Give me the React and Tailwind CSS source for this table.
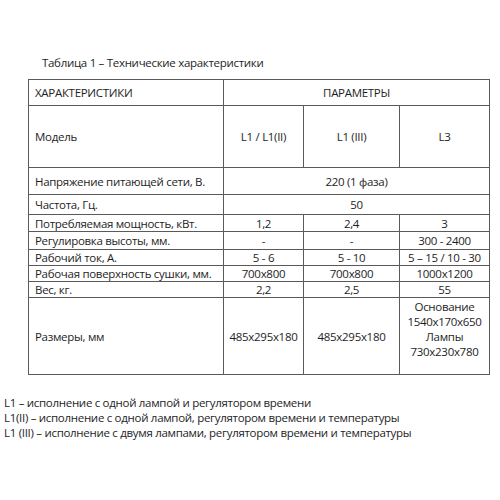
export default function App() {
  const font = { fontFamily: '"Open Sans", "Noto Sans", sans-serif' };
  const td = "border border-[#5a5a5a] p-0 align-middle";
  return (
    <div className="w-[500px] h-[500px] bg-white text-[#1e1e1e] relative tracking-[-0.3px]" style={font}>
      <div className="pt-[55px] pl-[42px] text-[11.5px] leading-[16px]">Таблица 1 – Технические характеристики</div>
      <table className="ml-[28px] mt-[8px] border-collapse table-fixed text-[11.5px] leading-[15px]">
        <colgroup>
          <col className="w-[195px]" />
          <col className="w-[80px]" />
          <col className="w-[96px]" />
          <col className="w-[90px]" />
        </colgroup>
        <tbody>
          <tr className="h-[26px]">
            <td className={td + " pl-[6px]"}>ХАРАКТЕРИСТИКИ</td>
            <td className={td + " text-center"} colSpan={3}>ПАРАМЕТРЫ</td>
          </tr>
          <tr className="h-[62px]">
            <td className={td + " pl-[6px]"}>Модель</td>
            <td className={td + " text-center"}>L1 / L1(II)</td>
            <td className={td + " text-center"}>L1 (III)</td>
            <td className={td + " text-center"}>L3</td>
          </tr>
          <tr className="h-[27px]">
            <td className={td + " pl-[6px]"}>Напряжение питающей сети, В.</td>
            <td className={td + " text-center"} colSpan={3}>220 (1 фаза)</td>
          </tr>
          <tr className="h-[20px]">
            <td className={td + " pl-[6px]"}>Частота, Гц.</td>
            <td className={td + " text-center"} colSpan={3}>50</td>
          </tr>
          <tr className="h-[17px]">
            <td className={td + " pl-[6px]"}>Потребляемая мощность, кВт.</td>
            <td className={td + " text-center"}>1,2</td>
            <td className={td + " text-center"}>2,4</td>
            <td className={td + " text-center"}>3</td>
          </tr>
          <tr className="h-[18px]">
            <td className={td + " pl-[6px]"}>Регулировка высоты, мм.</td>
            <td className={td + " text-center"}>-</td>
            <td className={td + " text-center"}>-</td>
            <td className={td + " text-center"}>300 - 2400</td>
          </tr>
          <tr className="h-[16px]">
            <td className={td + " pl-[6px]"}>Рабочий ток, А.</td>
            <td className={td + " text-center"}>5 - 6</td>
            <td className={td + " text-center"}>5 - 10</td>
            <td className={td + " text-center"}>5 – 15 / 10 - 30</td>
          </tr>
          <tr className="h-[16px]">
            <td className={td + " pl-[6px]"}>Рабочая поверхность сушки, мм.</td>
            <td className={td + " text-center"}>700x800</td>
            <td className={td + " text-center"}>700x800</td>
            <td className={td + " text-center"}>1000x1200</td>
          </tr>
          <tr className="h-[16px]">
            <td className={td + " pl-[6px]"}>Вес, кг.</td>
            <td className={td + " text-center"}>2,2</td>
            <td className={td + " text-center"}>2,5</td>
            <td className={td + " text-center"}>55</td>
          </tr>
          <tr className="h-[77px]">
            <td className={td + " pl-[6px]"}>Размеры, мм</td>
            <td className={td + " text-center"}>485x295x180</td>
            <td className={td + " text-center"}>485x295x180</td>
            <td className="border border-[#5a5a5a] p-0 pt-[1px] align-top text-center">
              <div>Основание</div>
              <div>1540x170x650</div>
              <div>Лампы</div>
              <div>730x230x780</div>
            </td>
          </tr>
        </tbody>
      </table>
      <div className="pl-[4px] mt-[20px] text-[11.5px] leading-[15px]">
        <div>L1 – исполнение с одной лампой и регулятором времени</div>
        <div>L1(II) – исполнение с одной лампой, регулятором времени и температуры</div>
        <div>L1 (III) – исполнение с двумя лампами, регулятором времени и температуры</div>
      </div>
    </div>
  );
}
